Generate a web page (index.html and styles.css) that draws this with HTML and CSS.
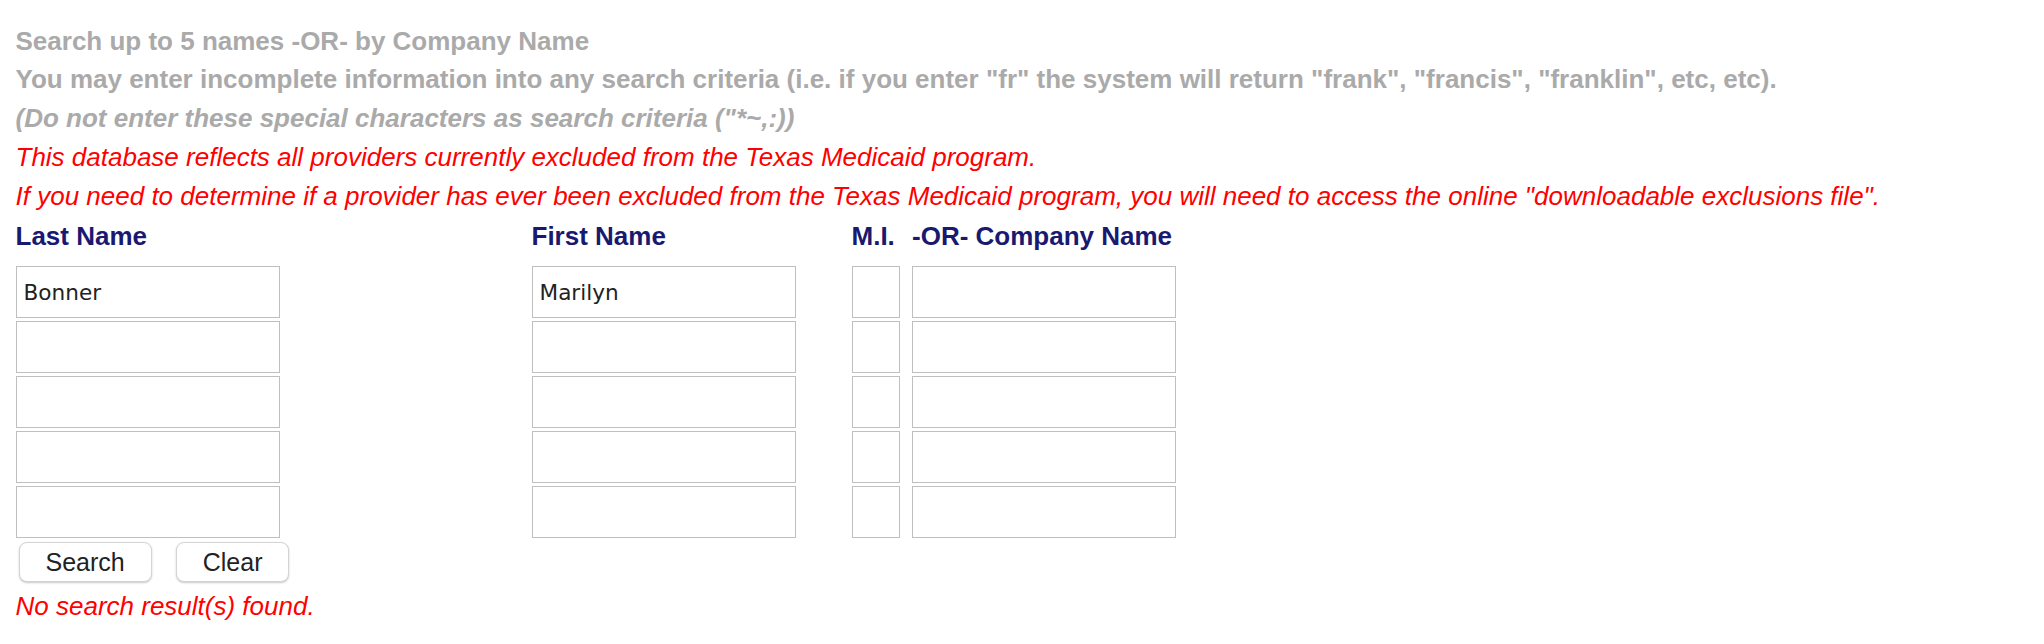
FILE: index.html
```html
<!DOCTYPE html>
<html lang="en">
<head>
<meta charset="utf-8">
<title>Exclusion Search</title>
<link rel="stylesheet" href="styles.css">
</head>
<body>
<div class="page">
  <div class="intro">
    <div class="note">Search up to 5 names -OR- by Company Name</div>
    <div class="note">You may enter incomplete information into any search criteria (i.e. if you enter "fr" the system will return "frank", "francis", "franklin", etc, etc).</div>
    <div class="note note-italic">(Do not enter these special characters as search criteria ("*~,:))</div>
    <div class="warn">This database reflects all providers currently excluded from the Texas Medicaid program.</div>
    <div class="warn">If you need to determine if a provider has ever been excluded from the Texas Medicaid program, you will need to access the online "downloadable exclusions file".</div>
  </div>
  <form class="search-grid">
    <div class="head">Last Name</div>
    <div class="head">First Name</div>
    <div class="head">M.I.</div>
    <div class="head">-OR- Company Name</div>

    <input class="field field-wide" type="text" value="Bonner">
    <input class="field field-wide" type="text" value="Marilyn">
    <input class="field field-mi" type="text">
    <input class="field field-wide" type="text">

    <input class="field field-wide" type="text">
    <input class="field field-wide" type="text">
    <input class="field field-mi" type="text">
    <input class="field field-wide" type="text">

    <input class="field field-wide" type="text">
    <input class="field field-wide" type="text">
    <input class="field field-mi" type="text">
    <input class="field field-wide" type="text">

    <input class="field field-wide" type="text">
    <input class="field field-wide" type="text">
    <input class="field field-mi" type="text">
    <input class="field field-wide" type="text">

    <input class="field field-wide" type="text">
    <input class="field field-wide" type="text">
    <input class="field field-mi" type="text">
    <input class="field field-wide" type="text">

    <div class="actions">
      <button class="btn" type="button">Search</button>
      <button class="btn" type="button">Clear</button>
    </div>
  </form>
  <div class="result">No search result(s) found.</div>
</div>
</body>
</html>
```

FILE: styles.css
```css
html, body {
  margin: 0;
  padding: 0;
  background: #ffffff;
}

.page {
  padding: 21.6px 15px 0 15.5px;
  font-family: "Liberation Sans", Arial, Helvetica, sans-serif;
  font-size: 26px;
  line-height: 38.75px;
}

.intro {
  display: flex;
  flex-direction: column;
}

.note {
  color: #aaaaaa;
  font-weight: bold;
  white-space: nowrap;
}

.note-italic {
  font-style: italic;
}

.warn {
  color: #ff0000;
  font-style: italic;
  white-space: nowrap;
}

.search-grid {
  display: grid;
  grid-template-columns: 516px 320px 60.5px 264px;
  row-gap: 3px;
  margin: 1.2px 0 0 0;
  align-items: start;
}

.head {
  color: #191970;
  font-weight: bold;
  white-space: nowrap;
  margin-bottom: 7.8px;
}

.field {
  box-sizing: border-box;
  height: 52px;
  margin: 0;
  padding: 0 7px;
  border: 1px solid #bfbfbf;
  border-radius: 0;
  background: #ffffff;
  font-family: "DejaVu Sans", Verdana, sans-serif;
  font-size: 21.6px;
  color: #222222;
  outline: none;
}

.field-wide {
  width: 264px;
}

.field-mi {
  width: 48px;
}

.actions {
  grid-column: 1 / 2;
  display: flex;
  gap: 24px;
  margin: 1px 0 0 3px;
}

.btn {
  box-sizing: border-box;
  height: 40px;
  padding: 0 26px;
  border: 1px solid #d4d4d4;
  border-radius: 8px;
  background: #ffffff;
  box-shadow: 0 1px 2px rgba(0, 0, 0, 0.22);
  font-family: "Liberation Sans", Arial, Helvetica, sans-serif;
  font-size: 25px;
  color: #222222;
  line-height: 38px;
}

.result {
  margin-top: 5.4px;
  color: #ff0000;
  font-style: italic;
}
```
